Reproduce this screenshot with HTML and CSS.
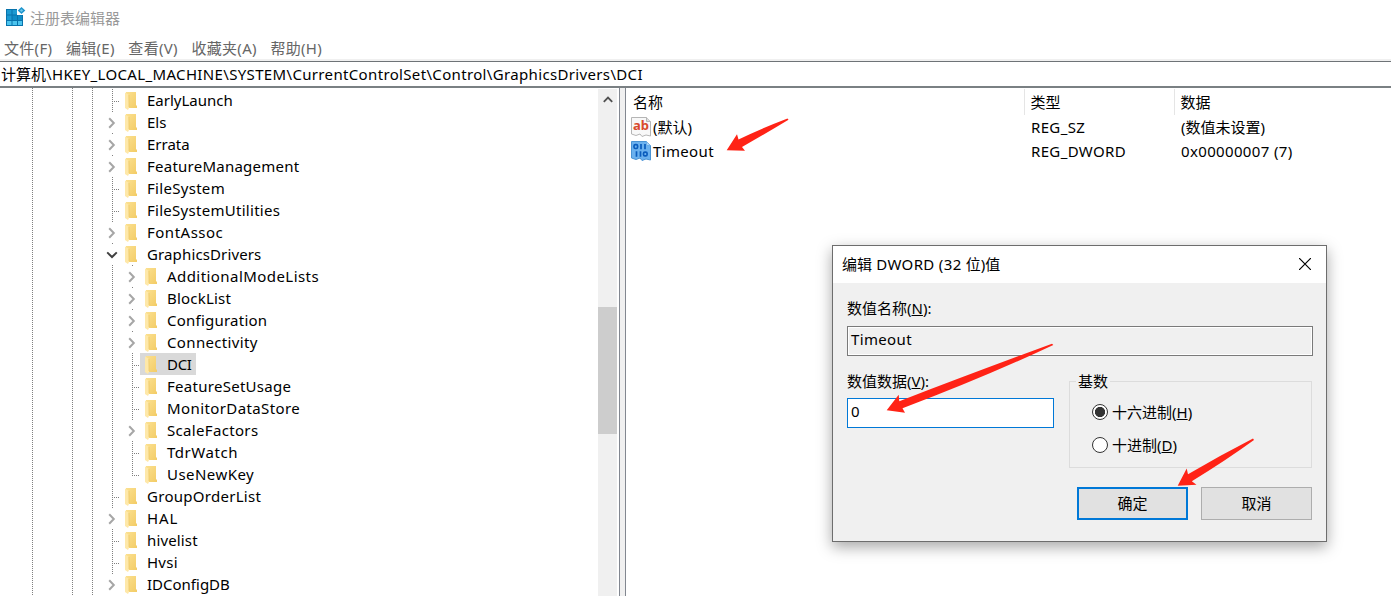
FILE: index.html
```html
<!DOCTYPE html>
<html lang="zh-CN">

<head>
    <meta charset="UTF-8">
    <meta name="viewport" content="width=device-width, initial-scale=1.0">
    <title>注册表编辑器</title>
    <link rel="stylesheet" href="styles.css">
</head>

<body>
    <svg class="sprite" width="0" height="0">
        <defs>
            <linearGradient id="folder-fill" x1="0" y1="0" x2="1" y2="1">
                <stop offset="0" stop-color="#fbe090" />
                <stop offset="1" stop-color="#f3cc66" />
            </linearGradient>
            <symbol id="folder" viewBox="0 0 12 18">
                <path d="M1 0H11V13L12 14V16H1Z" fill="url(#folder-fill)" />
                <path d="M0 0.5L3.5 2.5L4 11V16L3 18L0 16Z" fill="#fee8a9" />
                <path d="M4 3V15" stroke="#edc765" stroke-width="0.7" />
            </symbol>
            <symbol id="chevron" viewBox="0 0 8 12">
                <path d="M1.2 1.2L5.8 6L1.2 10.8" fill="none" stroke="#a6a6a6" stroke-width="2" />
            </symbol>
            <symbol id="chevron-down" viewBox="0 0 12 8">
                <path d="M1.2 1.4L6 6L10.8 1.4" fill="none" stroke="#404040" stroke-width="2" />
            </symbol>
        </defs>
    </svg>

    <header class="titlebar">
        <svg class="app-icon" width="20" height="20" viewBox="0 0 20 20">
            <path d="M0 2H11V8H17V19H0Z" fill="#0873ac" />
            <path d="M1 3H5.5V7.5H1ZM6.5 3H11V7.5H6.5ZM1 8.5H5.5V13H1Z" fill="#1c9ad2" />
            <path d="M6.5 8.5H11V13H6.5ZM12 8.5H16V13H12Z" fill="#0f8cc6" />
            <path d="M1 14H5.5V18H1ZM6.5 14H11V18H6.5ZM12 14H16V18H12Z" fill="#4cc4ee" />
            <path d="M15.5 0L19.300 3.500L15.500 7L11.700 3.500Z" fill="#1e95cd" />
            <path d="M15.500 2L17.200 3.500L15.500 5L13.800 3.500Z" fill="#6dc5e8" />
        </svg>
        <span>注册表编辑器</span>
    </header>
    <nav class="menubar">
        <span>文件(F)</span>
        <span>编辑(E)</span>
        <span>查看(V)</span>
        <span>收藏夹(A)</span>
        <span>帮助(H)</span>
    </nav>
    <div class="address">计算机<span class="path">\HKEY_LOCAL_MACHINE\SYSTEM\CurrentControlSet\Control\GraphicsDrivers\DCI</span></div>

    <main class="panes">
        <div class="tree-pane">
            <div class="tree" id="tree"></div>
            <div class="scrollbar">
                <svg class="scroll-up" width="10" height="7" viewBox="0 0 10 7">
                    <path d="M0.8 5.8L5 1.5L9.2 5.8" fill="none" stroke="#505050" stroke-width="1.8" />
                </svg>
                <div class="thumb"></div>
            </div>
        </div>
        <div class="splitter"></div>
        <div class="values">
            <div class="row head">
                <span>名称</span>
                <span>类型</span>
                <span>数据</span>
            </div>
            <div class="row">
                <span class="name">
                    <svg width="20" height="20" viewBox="0 0 20 20">
                        <path d="M0.5 0.5H15.5L19.5 4.5V19L15 18L11 19.5L9 17L5 18.5L0.5 17Z" fill="#f8f8f8" stroke="#b5b5b5" />
                        <path d="M15.5 0.5V4.5H19.5" fill="#ddd" stroke="#b5b5b5" />
                        <text class="glyph-ab" x="2" y="12.5">ab</text>
                    </svg>
                    (默认)
                </span>
                <span class="latin">REG_SZ</span>
                <span>(数值未设置)</span>
            </div>
            <div class="row">
                <span class="name">
                    <svg width="20" height="20" viewBox="0 0 20 20">
                        <path d="M0.5 0.5H15.5L19.5 4.5V19L15 18L11 19.5L9 17L5 18.5L0.5 17Z" fill="#6bb1ee" stroke="#4a93d4" />
                        <path d="M15.5 0.5V4.5H19.5" fill="#a9d2f5" stroke="#6aaee8" />
                        <g fill="none" stroke="#0a5cbc" stroke-width="1.7">
                            <rect x="3" y="3.7" width="3.6" height="3.8" rx="1.4" />
                            <path d="M10 2.900V8.300M14 2.900V8.300M5.500 10.300V15.700M9.500 10.300V15.700" />
                            <rect x="12.500" y="11.100" width="3.600" height="3.800" rx="1.400" />
                        </g>
                    </svg>
                    <span class="latin">Timeout</span>
                </span>
                <span class="latin">REG_DWORD</span>
                <span class="latin">0x00000007 (7)</span>
            </div>
        </div>
    </main>

    <section class="dialog">
        <div class="dialog-title">
            <span>编辑<span class="latin"> DWORD (32 </span>位)值</span>
            <svg width="12" height="12" viewBox="0 0 12 12">
                <path d="M0 0L12 12M12 0L0 12" stroke="#000" stroke-width="1.2" />
            </svg>
        </div>
        <div class="dialog-body">
            <div class="label">数值名称(<u>N</u>):</div>
            <div class="field readonly latin">Timeout</div>
            <div class="columns">
                <div class="data">
                    <div class="label">数值数据(<u>V</u>):</div>
                    <div class="field active">0</div>
                </div>
                <fieldset class="base">
                    <legend>基数</legend>
                    <div class="option"><i class="radio checked"></i>十六进制(<u>H</u>)</div>
                    <div class="option"><i class="radio"></i>十进制(<u>D</u>)</div>
                </fieldset>
            </div>
            <div class="actions">
                <div class="button primary">确定</div>
                <div class="button">取消</div>
            </div>
        </div>
    </section>

    <svg class="arrows" width="1391" height="596" viewBox="0 0 1391 596">
        <path d="M726.7 150.3L737 134.3L738.5 139.5Q760 129 787.5 118.5L788.5 119.8Q765 134 742 147L745 150.8Z" />
        <path d="M886.7 410.3L898.7 394.7L899.3 401.2Q970 374 1052 343.8L1053.3 344.9Q985 377 902.5 408.2L905 412.7Z" />
        <path d="M1177.7 485.8L1186.7 468.5L1188 474.2Q1219 456 1253 438.5L1254 440Q1225 461 1191.8 481.2L1196.5 484.8Z" />
    </svg>

    <script>
        // [name, depth, state, letter spacing]
        const keys = [
            ["EarlyLaunch", 1, "leaf", 0],
            ["Els", 1, "closed", 0],
            ["Errata", 1, "closed", 0],
            ["FeatureManagement", 1, "closed", 0.24],
            ["FileSystem", 1, "leaf", 0.3],
            ["FileSystemUtilities", 1, "leaf", 0.28],
            ["FontAssoc", 1, "closed", 0.5],
            ["GraphicsDrivers", 1, "open", 0.13],
            ["AdditionalModeLists", 2, "closed", 0.44],
            ["BlockList", 2, "closed", 0.2],
            ["Configuration", 2, "closed", 0.23],
            ["Connectivity", 2, "closed", 0.35],
            ["DCI", 2, "leaf selected", -0.3],
            ["FeatureSetUsage", 2, "leaf", 0.28],
            ["MonitorDataStore", 2, "leaf", 0.4],
            ["ScaleFactors", 2, "closed", 0.33],
            ["TdrWatch", 2, "leaf", 0.55],
            ["UseNewKey", 2, "leaf last", 0.45],
            ["GroupOrderList", 1, "leaf", 0.28],
            ["HAL", 1, "closed", 0.9],
            ["hivelist", 1, "leaf", 0.15],
            ["Hvsi", 1, "leaf", 0.25],
            ["IDConfigDB", 1, "closed", 0]
        ];

        const arrows = {
            closed: '<svg width="8" height="12"><use href="#chevron"/></svg>',
            open: '<svg width="12" height="8"><use href="#chevron-down"/></svg>'
        };

        document.querySelector("#tree").innerHTML = keys.map(([name, depth, state, spacing]) => `
            <div class="key ${state}">
                ${depth === 2 ? '<i class="guide"></i>' : ""}
                <span class="joint">${arrows[state] || ""}</span>
                <span class="key-label" style="letter-spacing: ${spacing}px"><svg width="12" height="18"><use href="#folder"/></svg>${name}</span>
            </div>`).join("");
    </script>
</body>

</html>
```
FILE: styles.css
```css
body {
    margin: 0;
    width: 1391px;
    height: 596px;
    overflow: hidden;
    display: flex;
    flex-direction: column;
    background-color: #fff;
    color: #000;
    font-family: "Noto Sans", "Noto Sans CJK SC", sans-serif;
    font-size: 15px;
    line-height: 22px;
    white-space: nowrap;
}

.sprite {
    position: absolute;
}

.titlebar {
    height: 35px;
    padding: 0 0 1px 6px;
    display: flex;
    align-items: center;
    gap: 4px;
    color: #999;
}

.app-icon {
    margin-bottom: 1px;
}

.menubar {
    height: 23px;
    padding-left: 4px;
    display: flex;
    align-items: center;
    gap: 13.6px;
    color: #666;
    letter-spacing: 0.3px;
    border-bottom: 2px solid #f0f0f0;
}

.address {
    height: 24px;
    padding-left: 1px;
    border-top: 1px solid #6e7377;
    border-bottom: 2px solid #7a8083;
    line-height: 24px;
}

.path {
    letter-spacing: 0.345px;
}

.panes {
    flex: 1;
    display: flex;
    min-height: 0;
}

.tree-pane {
    width: 619px;
    display: flex;
    border-right: 1px solid #828790;
    overflow: hidden;
}

/* ancestors' dotted lines */
.tree {
    flex: 1;
    padding: 1px 0 0 102px;
    background-image:
        repeating-linear-gradient(#808080 0 1px, transparent 1px 2px),
        repeating-linear-gradient(#808080 0 1px, transparent 1px 2px),
        repeating-linear-gradient(#808080 0 1px, transparent 1px 2px);
    background-size: 1px 100%;
    background-repeat: no-repeat;
    background-position: 32px 0, 72px 0, 92px 0;
}

.key {
    display: flex;
    height: 22px;
}

.guide,
.joint {
    width: 20px;
    background: repeating-linear-gradient(#808080 0 1px, transparent 1px 2px) 10px 0 / 1px 100% no-repeat;
}

.joint {
    width: 18px;
    display: flex;
    align-items: center;
    justify-content: center;
}

.leaf .joint {
    background:
        repeating-linear-gradient(#808080 0 1px, transparent 1px 2px) 10px 0 / 1px 100% no-repeat,
        repeating-linear-gradient(90deg, #808080 0 1px, transparent 1px 2px) 10px 12px / 8px 1px no-repeat;
}

.last .joint {
    background-size: 1px 13px, 8px 1px;
}

.closed .joint,
.open .joint {
    background-size: 1px 1px;
}

.joint svg {
    margin: 2px 0 0 2px;
}

.open .joint svg {
    margin-left: 1px;
}

.key-label {
    display: flex;
    align-items: center;
    gap: 10px;
    padding: 0 4px 0 5px;
}

.key-label svg {
    margin-top: 2px;
}

.selected .key-label {
    background-color: #d9d9d9;
}

.scrollbar {
    width: 19px;
    margin: 1px 2px 0 0;
    display: flex;
    flex-direction: column;
    align-items: center;
    background-color: #f0f0f0;
}

.scroll-up {
    margin-top: 7px;
}

.thumb {
    width: 19px;
    height: 127px;
    margin-top: 204px;
    background-color: #cdcdcd;
}

.splitter {
    width: 5px;
    background-color: #f0f0f0;
    border-right: 1px solid #828790;
}

.values {
    flex: 1;
    padding-top: 1px;
}

.row {
    display: grid;
    grid-template-columns: 398px 150px 1fr;
    height: 24px;
    line-height: 24px;
}

.row > span {
    padding-left: 7px;
}

.row > .name {
    display: flex;
    align-items: center;
    gap: 2px;
    padding-left: 5px;
}

.latin {
    letter-spacing: 0.35px;
}

.head {
    height: 26px;
    line-height: 26px;
}

.head span + span {
    border-left: 1px solid #e5e5e5;
    margin-left: -0.5px;
    padding-left: 6px;
}

.glyph-ab {
    font: bold 13px "Noto Sans", sans-serif;
    fill: #d8492c;
}

.dialog {
    position: absolute;
    left: 832px;
    top: 245px;
    width: 493px;
    height: 295px;
    background-color: #f0f0f0;
    border: 1px solid #6d6d6d;
    box-shadow: 0 5px 14px rgba(0, 0, 0, 0.35);
}

.dialog-title {
    height: 36px;
    padding: 0 15px 1px 9px;
    display: flex;
    align-items: center;
    justify-content: space-between;
    background-color: #fff;
}

.dialog-body {
    padding: 14px 13px 0 14px;
}

.label {
    height: 23px;
}

.field {
    box-sizing: border-box;
    height: 30px;
    margin-top: 6px;
    padding-left: 3px;
    line-height: 25px;
    border: 1px solid #7a7a7a;
}

.readonly {
    box-shadow: inset 0 0 0 1px #fff;
}

.active {
    margin-top: 5px;
    background-color: #fff;
    border-color: #0078d7;
}

.columns {
    display: flex;
    gap: 15px;
    margin-top: 14px;
}

.data {
    width: 207px;
}

.base {
    box-sizing: border-box;
    width: 243px;
    height: 98px;
    margin: 0;
    padding: 3px 0 0 22px;
    border: 1px solid #dcdcdc;
}

.base legend {
    margin-left: -16px;
    padding: 0 2px;
}

.option {
    display: flex;
    align-items: center;
    height: 33px;
}

.radio {
    box-sizing: border-box;
    width: 16px;
    height: 16px;
    margin-right: 4px;
    border: 1px solid #333;
    border-radius: 50%;
    background-color: #fff;
}

.checked {
    background: radial-gradient(circle, #333 0 4.8px, #fff 5.4px);
}

.actions {
    display: flex;
    justify-content: flex-end;
    gap: 13px;
    margin-top: 19px;
    padding-right: 1px;
}

.button {
    box-sizing: border-box;
    width: 111px;
    height: 33px;
    border: 1px solid #adadad;
    background-color: #e1e1e1;
    text-align: center;
    line-height: 31px;
}

.primary {
    border: 2px solid #0078d7;
    line-height: 29px;
}

/* red pointers drawn over the window */
.arrows {
    position: absolute;
    left: 0;
    top: 0;
    fill: #ff2316;
}
```
